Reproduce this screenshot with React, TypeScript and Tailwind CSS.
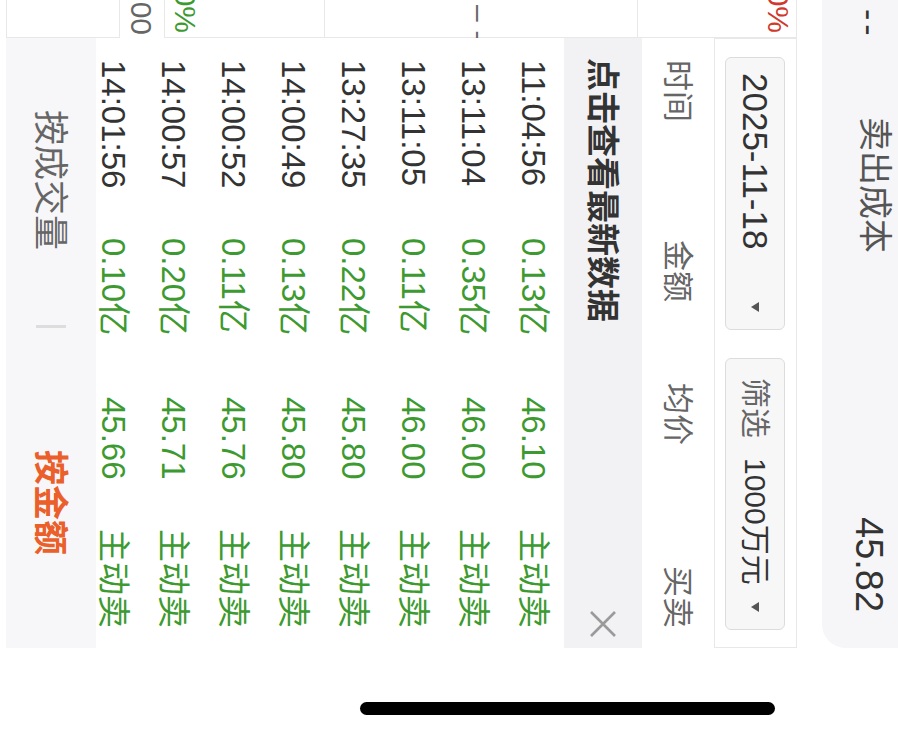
import React from "react";

const rows = [
  { time: "11:04:56", amount: "0.13亿", price: "46.10", side: "主动卖" },
  { time: "13:11:04", amount: "0.35亿", price: "46.00", side: "主动卖" },
  { time: "13:11:05", amount: "0.11亿", price: "46.00", side: "主动卖" },
  { time: "13:27:35", amount: "0.22亿", price: "45.80", side: "主动卖" },
  { time: "14:00:49", amount: "0.13亿", price: "45.80", side: "主动卖" },
  { time: "14:00:52", amount: "0.11亿", price: "45.76", side: "主动卖" },
  { time: "14:00:57", amount: "0.20亿", price: "45.71", side: "主动卖" },
  { time: "14:01:56", amount: "0.10亿", price: "45.66", side: "主动卖" },
];

const font = "font-['Liberation_Sans','Noto_Sans_CJK_SC',sans-serif]";

const Caret = () => (
  <svg width="10" height="8" viewBox="0 0 10 8">
    <path d="M0 0h10L5 8z" fill="#555" />
  </svg>
);

const Close = () => (
  <svg width="26" height="26" viewBox="0 0 26 26">
    <path d="M1 1L25 25M25 1L1 25" stroke="#9a9a9a" strokeWidth="2.6" />
  </svg>
);

export default function App() {
  return (
    <div className={`w-[898px] h-[738px] overflow-hidden bg-white ${font}`}>
      {/* phone was held sideways: page is laid out upright, then turned */}
      <div className="w-[738px] h-[898px] origin-top-left translate-x-[898px] rotate-90 flex bg-white">
        <div className="w-[648px] flex flex-col">
          {/* summary card */}
          <div className="h-[76px] flex items-start bg-[#f6f6f8] rounded-br-[24px] leading-none">
            <div className="w-[117px] pl-[9px] pt-[11px] text-[34px] text-[#333] tracking-[4px]">--</div>
            <div className="w-[400px] pt-[6px] text-[34px] text-[#555]">卖出成本</div>
            <div className="pt-[10px] text-[38px] text-[#333]">45.82</div>
          </div>
          <div className="h-[25px]" />

          <div className="h-[791px] flex">
            {/* table underneath the panel */}
            <div className="w-[38px] flex flex-col overflow-hidden border-t border-[#e8e8e8] leading-none whitespace-nowrap">
              <div className="h-[159px] flex justify-end items-start pt-[3px] pr-[4px] border-r border-b border-[#e8e8e8] text-[30px] text-[#d0392b]">
                0.00%
              </div>
              <div className="h-[313px] flex justify-start items-start pt-[143px] pl-[5px] border-r border-b border-[#e8e8e8] text-[30px] text-[#666] tracking-[10px]">
                ––
              </div>
              <div className="h-[160px] flex justify-end items-start pt-[124px] pr-[4px] border-r border-b border-[#e8e8e8] text-[30px] text-[#3d9a30]">
                0.00%
              </div>
              <div className="h-[45px] flex justify-end items-start pt-[8px] pr-[3px] border-b border-[#e8e8e8] text-[30px] text-[#666]">
                0.00
              </div>
              <div className="flex-1 border-r border-b border-[#e8e8e8]" />
            </div>

            {/* trade detail panel */}
            <div className="w-[610px] flex flex-col leading-none">
              <div className="h-[83px] flex items-center gap-[28px] pl-[18px] border border-[#e8e8e8]">
                <div className="w-[273px] h-[60px] flex items-center justify-between pl-[15px] pr-[17px] rounded-[6px] border border-[#dcdcdc] bg-[#f7f7f8]">
                  <span className="text-[35px] text-[#333]">2025-11-18</span>
                  <Caret />
                </div>
                <div className="w-[272px] h-[60px] flex items-center pl-[19px] pr-[17px] rounded-[6px] border border-[#dcdcdc] bg-[#f7f7f8] text-[30px]">
                  <span className="text-[#666]">筛选</span>
                  <span className="ml-[20px] text-[#333]">1000万元</span>
                  <span className="ml-auto">
                    <Caret />
                  </span>
                </div>
              </div>

              <div className="h-[72px] flex items-center pl-[22px] pr-[20px] text-[31px] text-[#666]">
                <div className="w-[180px]">时间</div>
                <div className="w-[143px]">金额</div>
                <div className="flex-1">均价</div>
                <div>买卖</div>
              </div>

              <div className="h-[78px] flex items-center justify-between pl-[20px] pr-[11px] bg-[#f2f2f4]">
                <span className="text-[33px] font-bold text-[#333]">点击查看最新数据</span>
                <Close />
              </div>

              <div className="flex-1 overflow-hidden">
                {rows.map((r, i) => (
                  <div key={i} className="h-[60px] flex items-center pl-[22px] pr-[20px] text-[33px] text-[#3d9a30]">
                    <div className="w-[178px] text-[#333]">{r.time}</div>
                    <div className="w-[159px]">{r.amount}</div>
                    <div className="flex-1">{r.price}</div>
                    <div>{r.side}</div>
                  </div>
                ))}
              </div>

              <div className="h-[90px] flex items-center pl-[72px] bg-[#f7f7f9] text-[35px]">
                <span className="text-[#666]">按成交量</span>
                <span className="ml-[75px] w-[3px] h-[30px] bg-[#dddddd]" />
                <span className="ml-[122px] font-bold text-[#ea5f2a]">按金额</span>
              </div>
            </div>
          </div>
        </div>

        {/* home indicator */}
        <div className="w-[90px] pt-[123px] pl-[54px]">
          <div className="w-[13px] h-[415px] rounded-full bg-black" />
        </div>
      </div>
    </div>
  );
}
